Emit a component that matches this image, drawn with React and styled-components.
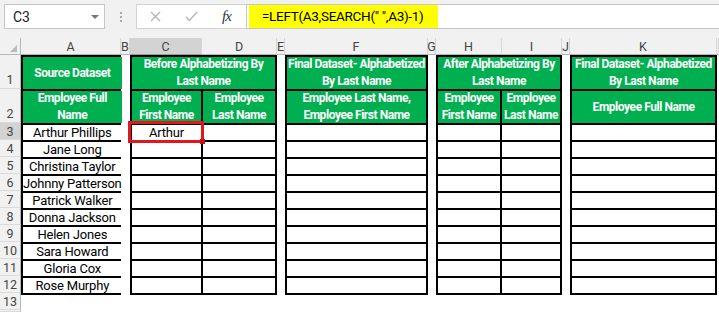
import React from 'react';
import styled, { createGlobalStyle } from 'styled-components';

const FONT = `Roboto, "Liberation Sans", Arial, sans-serif`;

const GlobalStyle = createGlobalStyle`
  html, body { margin: 0; padding: 0; background: #fff; }
  body { width: 719px; height: 312px; overflow: hidden; font-family: ${FONT}; }
  * { box-sizing: border-box; }
`;

const Window = styled.div`
  width: 719px;
  height: 312px;
  display: flex;
  flex-direction: column;
  overflow: hidden;
  background: #fff;
`;

/* ---------- formula bar ---------- */
const FormulaBar = styled.div`
  height: 38px;
  flex: none;
  background: #f1f1f1;
  display: flex;
  align-items: flex-start;
  padding: 4px 0 0 4px;
`;

const NameBox = styled.div`
  width: 101px;
  height: 25px;
  background: #fff;
  border: 1px solid #c6c6c6;
  display: flex;
  align-items: center;
  justify-content: space-between;
  padding: 0 5px 0 8px;
  font-size: 14px;
  letter-spacing: -0.2px;
  color: #222;
`;

const DropArrow = styled.span`
  width: 0;
  height: 0;
  border-left: 4px solid transparent;
  border-right: 4px solid transparent;
  border-top: 4px solid #777;
`;

const Grip = styled.div`
  width: 31px;
  height: 25px;
  display: flex;
  flex-direction: column;
  align-items: center;
  justify-content: center;
  gap: 2px;
`;

const GripDot = styled.span`
  width: 2px;
  height: 2px;
  background: #a8a8a8;
`;

const FxBox = styled.div`
  width: 110px;
  height: 25px;
  background: #fff;
  border: 1px solid #d2d2d2;
  border-right: none;
  display: flex;
  align-items: center;
  padding-left: 13px;
`;

const IconSlot = styled.span`
  width: ${(p) => p.$w}px;
  display: flex;
  align-items: center;
`;

const Fx = styled.span`
  font-family: "Liberation Serif", "Times New Roman", serif;
  font-style: italic;
  font-size: 15px;
  color: #333;
  letter-spacing: -1px;
`;

const FormulaInput = styled.div`
  flex: 1;
  height: 25px;
  background: #fff;
  border: 1px solid #c6c6c6;
  border-right: none;
  padding-left: 2px;
  display: flex;
`;

const Highlight = styled.span`
  height: 23px;
  background: #ffff00;
  padding: 0 14px 0 13px;
  font-size: 13.5px;
  letter-spacing: -0.3px;
  line-height: 23px;
  color: #000;
  white-space: pre;
`;

/* ---------- sheet ---------- */
const Sheet = styled.div`
  flex: 1;
  display: grid;
  grid-template-columns: 21px 100px 9px 72px 75px 8px 143px 8px 66px 60px 8px 147px 1fr;
  grid-template-rows: 17px 34px 34px repeat(11, 17px) 1fr;
  background: #fff;
`;

const ColHead = styled.div`
  grid-row: 1;
  background: ${(p) => (p.$active ? '#d3d3d3' : '#f1f1f1')};
  border-right: 1px solid #d6d6d6;
  border-bottom: 1px solid ${(p) => (p.$active ? '#9a9a9a' : '#b6b6b6')};
  font-size: 12.5px;
  color: #444;
  display: flex;
  align-items: center;
  justify-content: center;
  overflow: visible;
  white-space: nowrap;
`;

const Corner = styled.div`
  grid-row: 1;
  grid-column: 1;
  background: #f1f1f1;
  border-right: 1px solid #b6b6b6;
  border-bottom: 1px solid #b6b6b6;
  display: flex;
  align-items: flex-end;
  justify-content: flex-end;
  padding: 0 3px 2px 0;
`;

const CornerTri = styled.span`
  width: 0;
  height: 0;
  border-left: 7px solid transparent;
  border-bottom: 7px solid #b9b9b9;
`;

const RowHead = styled.div`
  grid-column: 1;
  background: ${(p) => (p.$active ? '#d3d3d3' : '#f1f1f1')};
  border-right: 1px solid #b6b6b6;
  border-bottom: 1px solid #dadada;
  font-size: 12.5px;
  color: #444;
  display: flex;
  align-items: ${(p) => (p.$tall ? 'flex-end' : 'center')};
  justify-content: center;
  padding-bottom: ${(p) => (p.$tall ? '1px' : '0')};
`;

const Table = styled.div`
  grid-column: ${(p) => p.$col};
  grid-row: 2 / 14;
  align-self: start;
  display: grid;
  grid-template-columns: ${(p) => p.$cols};
  grid-template-rows: 32px 32px repeat(10, 15px);
  gap: 2px;
  background: #000;
  border: 2px solid #000;
`;

const HeadCell = styled.div`
  grid-column: span ${(p) => p.$span || 1};
  background: #00b050;
  color: #fff;
  font-weight: bold;
  font-size: 12px;
  letter-spacing: -0.45px;
  line-height: 17px;
  text-align: center;
  white-space: nowrap;
  display: flex;
  flex-direction: column;
  justify-content: center;
`;

const DataCell = styled.div`
  background: #fff;
  color: #000;
  font-size: 13px;
  letter-spacing: -0.2px;
  line-height: 15px;
  text-align: center;
  white-space: nowrap;
  position: relative;

  ${(p) =>
    p.$selected &&
    `
    &::before {
      content: '';
      position: absolute;
      top: -4px; left: -4px; right: -3px; bottom: -3px;
      border: 3px solid #e4161c;
      z-index: 2;
    }
    &::after {
      content: '';
      position: absolute;
      right: -4px; bottom: -4px;
      width: 5px; height: 5px;
      background: #c41016;
      z-index: 3;
    }
  `}
`;

const names = [
  'Arthur Phillips',
  'Jane Long',
  'Christina Taylor',
  'Johnny Patterson',
  'Patrick Walker',
  'Donna Jackson',
  'Helen Jones',
  'Sara Howard',
  'Gloria Cox',
  'Rose Murphy',
];

const letters = ['A', 'B', 'C', 'D', 'E', 'F', 'G', 'H', 'I', 'J', 'K', ''];

const Lines = ({ lines }) => lines.map((l, i) => <span key={i}>{l}</span>);

const emptyRows = (cols, selectFirst) => {
  const out = [];
  for (let r = 0; r < 10; r++) {
    for (let c = 0; c < cols; c++) {
      const sel = selectFirst && r === 0 && c === 0;
      out.push(
        <DataCell key={`${r}-${c}`} $selected={sel}>
          {sel ? 'Arthur' : ''}
        </DataCell>
      );
    }
  }
  return out;
};

const CrossIcon = () => (
  <svg width="11" height="11" viewBox="0 0 11 11">
    <path d="M1 1 L10 10 M10 1 L1 10" stroke="#b4b4b4" strokeWidth="1.3" fill="none" />
  </svg>
);

const CheckIcon = () => (
  <svg width="13" height="11" viewBox="0 0 13 11">
    <path d="M1 6 L4.5 9.5 L12 1" stroke="#b4b4b4" strokeWidth="1.3" fill="none" />
  </svg>
);

export default function App() {
  return (
    <Window>
      <GlobalStyle />
      <FormulaBar>
        <NameBox>
          <span>C3</span>
          <DropArrow />
        </NameBox>
        <Grip>
          <GripDot />
          <GripDot />
          <GripDot />
        </Grip>
        <FxBox>
          <IconSlot $w={35}>
            <CrossIcon />
          </IconSlot>
          <IconSlot $w={37}>
            <CheckIcon />
          </IconSlot>
          <IconSlot $w={20}>
            <Fx>fx</Fx>
          </IconSlot>
        </FxBox>
        <FormulaInput>
          <Highlight>{'=LEFT(A3,SEARCH(" ",A3)-1)'}</Highlight>
        </FormulaInput>
      </FormulaBar>

      <Sheet>
        <Corner>
          <CornerTri />
        </Corner>
        {letters.map((l, i) => (
          <ColHead key={i} $active={l === 'C'} style={{ gridColumn: i + 2 }}>
            {l}
          </ColHead>
        ))}
        {Array.from({ length: 14 }, (_, i) => (
          <RowHead key={i} $tall={i < 2} $active={i === 2} style={{ gridRow: i + 2 }}>
            {i < 13 ? i + 1 : ''}
          </RowHead>
        ))}

        <Table $col="2 / 3" $cols="1fr">
          <HeadCell>Source Dataset</HeadCell>
          <HeadCell>
            <Lines lines={['Employee Full', 'Name']} />
          </HeadCell>
          {names.map((n) => (
            <DataCell key={n}>{n}</DataCell>
          ))}
        </Table>

        <Table $col="4 / 6" $cols="69px 1fr">
          <HeadCell $span={2}>
            <Lines lines={['Before Alphabetizing By', 'Last Name']} />
          </HeadCell>
          <HeadCell>
            <Lines lines={['Employee', 'First Name']} />
          </HeadCell>
          <HeadCell>
            <Lines lines={['Employee', 'Last Name']} />
          </HeadCell>
          {emptyRows(2, true)}
        </Table>

        <Table $col="7 / 8" $cols="1fr">
          <HeadCell>
            <Lines lines={['Final Dataset- Alphabetized', 'By Last Name']} />
          </HeadCell>
          <HeadCell>
            <Lines lines={['Employee Last Name,', 'Employee First Name']} />
          </HeadCell>
          {emptyRows(1, false)}
        </Table>

        <Table $col="9 / 11" $cols="62px 1fr">
          <HeadCell $span={2}>
            <Lines lines={['After Alphabetizing By', 'Last Name']} />
          </HeadCell>
          <HeadCell>
            <Lines lines={['Employee', 'First Name']} />
          </HeadCell>
          <HeadCell>
            <Lines lines={['Employee', 'Last Name']} />
          </HeadCell>
          {emptyRows(2, false)}
        </Table>

        <Table $col="12 / 13" $cols="1fr">
          <HeadCell>
            <Lines lines={['Final Dataset- Alphabetized', 'By Last Name']} />
          </HeadCell>
          <HeadCell>Employee Full Name</HeadCell>
          {emptyRows(1, false)}
        </Table>
      </Sheet>
    </Window>
  );
}
